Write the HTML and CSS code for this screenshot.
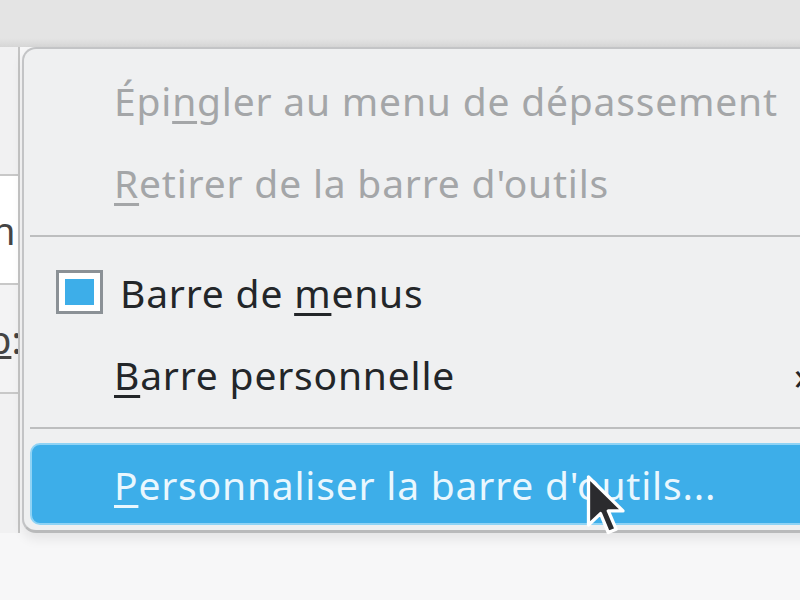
FILE: index.html
```html
<!DOCTYPE html>
<html lang="fr">
<head>
<meta charset="utf-8">
<link rel="stylesheet" href="styles.css">
</head>
<body>
<div class="page">
  <div class="topbar"></div>
  <div class="behind">
    <div class="cell cell-a"><span>n</span></div>
    <div class="cell cell-b"><span><u>p</u>:</span></div>
  </div>

  <div class="menu">
    <div class="item disabled"><span class="label">Épi<u>n</u>gler au menu de dépassement</span></div>
    <div class="item disabled"><span class="label"><u>R</u>etirer de la barre d'outils</span></div>
    <div class="sep"></div>
    <div class="item checked"><span class="check"><span class="check-fill"></span></span><span class="label">Barre de <u>m</u>enus</span></div>
    <div class="item"><span class="label"><u>B</u>arre personnelle</span><span class="arrow">›</span></div>
    <div class="sep"></div>
    <div class="item active"><span class="label"><u>P</u>ersonnaliser la barre d'outils...</span></div>
  </div>

  <svg class="cursor" width="40" height="63" viewBox="0 0 13 21">
    <path d="M1 1 L1 17 L5 13.2 L7.6 19.5 L10.2 18.4 L7.6 12.3 L12.5 12.3 Z" fill="#2b2b2e" stroke="#ffffff" stroke-width="1.1" stroke-linejoin="round"/>
  </svg>
</div>
</body>
</html>
```

FILE: styles.css
```css
html, body {
  margin: 0;
  padding: 0;
}
body {
  width: 800px;
  height: 600px;
  overflow: hidden;
  background: #f7f7f8;
  font-family: "Noto Sans", "DejaVu Sans", sans-serif;
}
.page {
  position: relative;
  width: 800px;
  height: 600px;
}
.topbar {
  height: 47px;
  background: linear-gradient(#e4e4e4 0, #e4e4e4 38px, #d6d6d6 47px);
}
.behind {
  width: 20px;
  border-right: 2px solid #c4c4c4;
  height: 486px;
  background: #f1f1f2;
  padding-top: 127px;
  box-sizing: border-box;
}
.cell {
  height: 107px;
  border-top: 2px solid #c8c8c8;
  overflow: hidden;
  display: flex;
  align-items: center;
  font-size: 38px;
  color: #444;
}
.cell span {
  margin-left: -8px;
}
.cell-a {
  background: #ffffff;
}
.cell-b {
  background: #f3f3f4;
  border-bottom: 2px solid #c8c8c8;
}
.cell-b span {
  margin-left: -12px;
}
.cell-b u {
  text-decoration-thickness: 3px;
}

.menu {
  position: absolute;
  left: 22px;
  top: 47px;
  width: 820px;
  height: 486px;
  box-sizing: border-box;
  background: #eff0f1;
  border: 2px solid #c3c4c6;
  border-bottom-width: 3px;
  border-bottom-color: #b9babb;
  border-radius: 14px;
  padding: 10px 0 7px 6px;
  box-shadow: 0 6px 12px rgba(0, 0, 0, 0.08);
  display: flex;
  flex-direction: column;
}
.item {
  height: 82px;
  display: flex;
  align-items: center;
  position: relative;
  padding-left: 84px;
  font-size: 39px;
  letter-spacing: 0.8px;
  color: #232629;
  flex: none;
}
.item u {
  text-decoration-thickness: 3px;
  text-underline-offset: 5px;
}
.item.disabled {
  color: #a4a6a8;
}
.item.checked {
  padding-left: 90px;
}
.sep {
  height: 2px;
  background: #bdbebf;
  margin: 12px 0 14px 0;
  flex: none;
}
.item.active {
  background: #3daee9;
  border: 2px solid #8fd3f5;
  border-radius: 10px;
  color: #e9f7fe;
  height: 82px;
  box-sizing: border-box;
  padding-left: 82px;
}
.check {
  position: absolute;
  left: 26px;
  top: 19px;
  width: 47px;
  height: 44px;
  box-sizing: border-box;
  border: 3px solid #8b9196;
  background: #ffffff;
  padding: 6px 6px;
  display: flex;
}
.check-fill {
  flex: 1;
  background: #3daee9;
}
.arrow {
  position: absolute;
  left: 764px;
  font-size: 40px;
  color: #232629;
}
.cursor {
  position: absolute;
  left: 585px;
  top: 474px;
}
```
